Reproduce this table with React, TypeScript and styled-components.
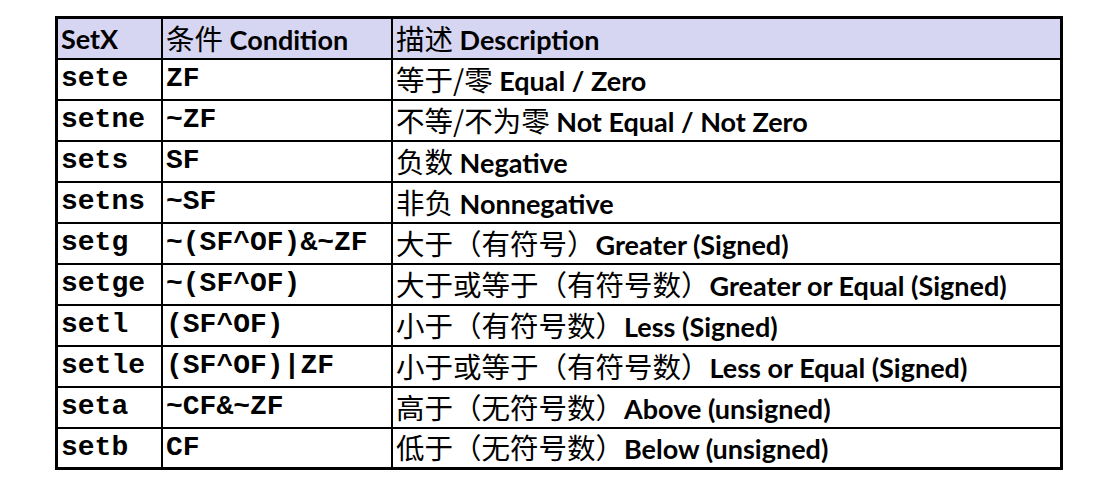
import styled, { createGlobalStyle } from 'styled-components';

const GlobalStyle = createGlobalStyle`
    html, body {
        margin: 0;
        padding: 0;
        background: #fff;
    }
`;

const Page = styled.div`
    padding: 16px 0 0 55px;
`;

const Table = styled.table`
    border-collapse: collapse;
    border: 3px solid #000;
    table-layout: fixed;
    width: 1008px;
`;

const HeadRow = styled.tr`
    background: #d6d6f2;
    height: 41px;
`;

const Row = styled.tr`
    height: 41px;
`;

const Cell = styled.td<{ $w?: number }>`
    border: 2px solid #000;
    padding: 0 0 0 3px;
    width: ${props => (props.$w ? `${props.$w}px` : 'auto')};
    vertical-align: middle;
    white-space: nowrap;
    overflow: hidden;
    color: #000;
    line-height: 1;
`;

const Mono = styled.span`
    font-family: 'Liberation Mono', 'Courier New', monospace;
    font-weight: 700;
    font-size: 28px;
`;

const Cn = styled.span`
    font-family: 'Noto Sans CJK SC', sans-serif;
    font-weight: 400;
    font-size: 28.5px;
`;

const En = styled.span`
    font-family: Lato, 'Noto Sans', sans-serif;
    font-weight: 700;
    font-size: 27px;
`;

type Item = { op: string; cond: string; cn: string; en: string };

const rows: Item[] = [
    { op: 'sete', cond: 'ZF', cn: '等于/零', en: ' Equal / Zero' },
    { op: 'setne', cond: '~ZF', cn: '不等/不为零', en: ' Not Equal / Not Zero' },
    { op: 'sets', cond: 'SF', cn: '负数', en: ' Negative' },
    { op: 'setns', cond: '~SF', cn: '非负', en: ' Nonnegative' },
    { op: 'setg', cond: '~(SF^OF)&~ZF', cn: '大于（有符号）', en: 'Greater (Signed)' },
    { op: 'setge', cond: '~(SF^OF)', cn: '大于或等于（有符号数）', en: 'Greater or Equal (Signed)' },
    { op: 'setl', cond: '(SF^OF)', cn: '小于（有符号数）', en: 'Less (Signed)' },
    { op: 'setle', cond: '(SF^OF)|ZF', cn: '小于或等于（有符号数）', en: 'Less or Equal (Signed)' },
    { op: 'seta', cond: '~CF&~ZF', cn: '高于（无符号数）', en: 'Above (unsigned)' },
    { op: 'setb', cond: 'CF', cn: '低于（无符号数）', en: 'Below (unsigned)' }
];

export default function App() {
    return (
        <>
            <GlobalStyle />
            <Page>
                <Table>
                    <tbody>
                        <HeadRow>
                            <Cell $w={100}>
                                <En>SetX</En>
                            </Cell>
                            <Cell $w={225}>
                                <Cn>条件</Cn>
                                <En> Condition</En>
                            </Cell>
                            <Cell>
                                <Cn>描述</Cn>
                                <En> Description</En>
                            </Cell>
                        </HeadRow>
                        {rows.map(r => (
                            <Row key={r.op}>
                                <Cell>
                                    <Mono>{r.op}</Mono>
                                </Cell>
                                <Cell>
                                    <Mono>{r.cond}</Mono>
                                </Cell>
                                <Cell>
                                    <Cn>{r.cn}</Cn>
                                    <En>{r.en}</En>
                                </Cell>
                            </Row>
                        ))}
                    </tbody>
                </Table>
            </Page>
        </>
    );
}
